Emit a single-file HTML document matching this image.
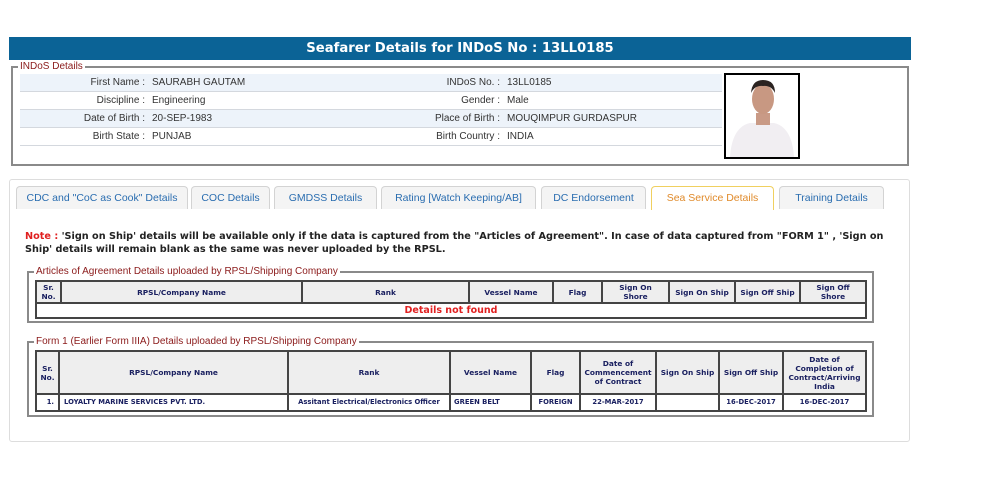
<!DOCTYPE html>
<html><head><style>
*{margin:0;padding:0;box-sizing:border-box}
body{width:984px;height:504px;background:#fff;position:relative;font-family:"Liberation Sans",sans-serif;overflow:hidden}
.a{position:absolute}
.hdr{left:9px;top:37px;width:902px;height:23px;background:#0b6396;color:#fff;font:bold 13.2px "DejaVu Sans",sans-serif;text-align:center;line-height:23px}
.fs{position:absolute;border:2px solid #8a8a8a}
.lg{position:absolute;background:#fff;color:#8b1a1a;font-size:10px;padding:0 2px;line-height:12px}
.row{position:absolute;left:20px;width:702px;height:18px;border-bottom:1px solid #d4d8de;font-size:10px;color:#333;line-height:18px}
.row.alt{background:#edf3fa}
.row span{position:absolute;white-space:nowrap}
.l1{right:577px;text-align:right}
.v1{left:132px}
.l2{right:222px;text-align:right}
.v2{left:487px}
.tab{position:absolute;top:186px;height:23px;background:#f4f4f4;border:1px solid #d3d3d3;border-bottom:none;border-radius:4px 4px 0 0;color:#2a6db0;font-size:10.5px;text-align:center;line-height:23px}
.note{left:25px;top:230px;width:870px;font:bold 9.7px "DejaVu Sans",sans-serif;color:#222;line-height:13px}
table{position:absolute;border-collapse:collapse;font:bold 7px "DejaVu Sans",sans-serif;color:#1a2060;table-layout:fixed}
td,th{border:2px solid #444;text-align:center;padding:0;line-height:9px;overflow:hidden;white-space:nowrap}
th{background:#eeeeee;font-size:7.4px}
</style></head><body>
<div class="a hdr">Seafarer Details for INDoS No : 13LL0185</div>
<div class="fs" style="left:11px;top:66px;width:898px;height:100px"></div>
<div class="lg" style="left:18px;top:61px">INDoS Details</div>
<div class="row alt" style="top:74px"><span class="l1">First Name :</span><span class="v1">SAURABH GAUTAM</span><span class="l2">INDoS No. :</span><span class="v2">13LL0185</span></div>
<div class="row" style="top:92px"><span class="l1">Discipline :</span><span class="v1">Engineering</span><span class="l2">Gender :</span><span class="v2">Male</span></div>
<div class="row alt" style="top:110px"><span class="l1">Date of Birth :</span><span class="v1">20-SEP-1983</span><span class="l2">Place of Birth :</span><span class="v2">MOUQIMPUR GURDASPUR</span></div>
<div class="row" style="top:128px"><span class="l1">Birth State :</span><span class="v1">PUNJAB</span><span class="l2">Birth Country :</span><span class="v2">INDIA</span></div>
<div class="a" style="left:724px;top:73px;width:76px;height:86px;border:2px solid #000;background:#fff;overflow:hidden">
<svg width="72" height="82"><path d="M4 82 Q6 52 24 48 L48 48 Q66 52 68 82Z" fill="#f1eef2"/><rect x="30" y="38" width="14" height="12" fill="#c99a86"/><ellipse cx="37" cy="24" rx="11" ry="15" fill="#c89882"/><path d="M25 18 Q26 5 37 5 Q49 5 49 18 Q45 10 37 11 Q29 10 25 18Z" fill="#2b2321"/></svg></div>

<div class="a" style="left:9px;top:179px;width:901px;height:263px;border:1px solid #ddd;border-radius:3px"></div>
<div class="tab" style="left:16px;width:172px">CDC and "CoC as Cook" Details</div>
<div class="tab" style="left:191px;width:79px">COC Details</div>
<div class="tab" style="left:274px;width:103px">GMDSS Details</div>
<div class="tab" style="left:381px;width:155px">Rating [Watch Keeping/AB]</div>
<div class="tab" style="left:541px;width:105px">DC Endorsement</div>
<div class="tab" style="left:651px;width:123px;background:#fff;border-color:#f0d060;color:#e08a2a;height:24px">Sea Service Details</div>
<div class="tab" style="left:779px;width:105px">Training Details</div>

<div class="a note"><span style="color:#e02020">Note :</span> 'Sign on Ship' details will be available only if the data is captured from the "Articles of Agreement". In case of data captured from "FORM 1" , 'Sign on Ship' details will remain blank as the same was never uploaded by the RPSL.</div>

<div class="fs" style="left:27px;top:271px;width:847px;height:52px"></div>
<div class="lg" style="left:34px;top:266px">Articles of Agreement Details uploaded by RPSL/Shipping Company</div>
<table style="left:35px;top:280px;width:830px">
<colgroup><col style="width:25px"><col style="width:241px"><col style="width:167px"><col style="width:84px"><col style="width:49px"><col style="width:67px"><col style="width:66px"><col style="width:65px"><col style="width:66px"></colgroup>
<tr style="height:22px"><th>Sr.<br>No.</th><th>RPSL/Company Name</th><th>Rank</th><th>Vessel Name</th><th>Flag</th><th>Sign On<br>Shore</th><th>Sign On Ship</th><th>Sign Off Ship</th><th>Sign Off<br>Shore</th></tr>
<tr style="height:15px"><td colspan="9" style="color:#e02020;font-size:9.5px;line-height:11px">Details not found</td></tr>
</table>

<div class="fs" style="left:27px;top:341px;width:847px;height:76px"></div>
<div class="lg" style="left:34px;top:336px">Form 1 (Earlier Form IIIA) Details uploaded by RPSL/Shipping Company</div>
<table style="left:35px;top:350px;width:830px">
<colgroup><col style="width:23px"><col style="width:229px"><col style="width:162px"><col style="width:81px"><col style="width:49px"><col style="width:76px"><col style="width:63px"><col style="width:64px"><col style="width:83px"></colgroup>
<tr style="height:43px"><th>Sr.<br>No.</th><th>RPSL/Company Name</th><th>Rank</th><th>Vessel Name</th><th>Flag</th><th>Date of<br>Commencement<br>of Contract</th><th>Sign On Ship</th><th>Sign Off Ship</th><th>Date of<br>Completion of<br>Contract/Arriving<br>India</th></tr>
<tr style="height:17px;font-size:6.8px"><td style="text-align:right;padding-right:4px">1.</td><td style="text-align:left;padding-left:4px">LOYALTY MARINE SERVICES PVT. LTD.</td><td>Assitant Electrical/Electronics Officer</td><td style="text-align:left;padding-left:3px">GREEN BELT</td><td>FOREIGN</td><td>22-MAR-2017</td><td></td><td>16-DEC-2017</td><td>16-DEC-2017</td></tr>
</table>
</body></html>
